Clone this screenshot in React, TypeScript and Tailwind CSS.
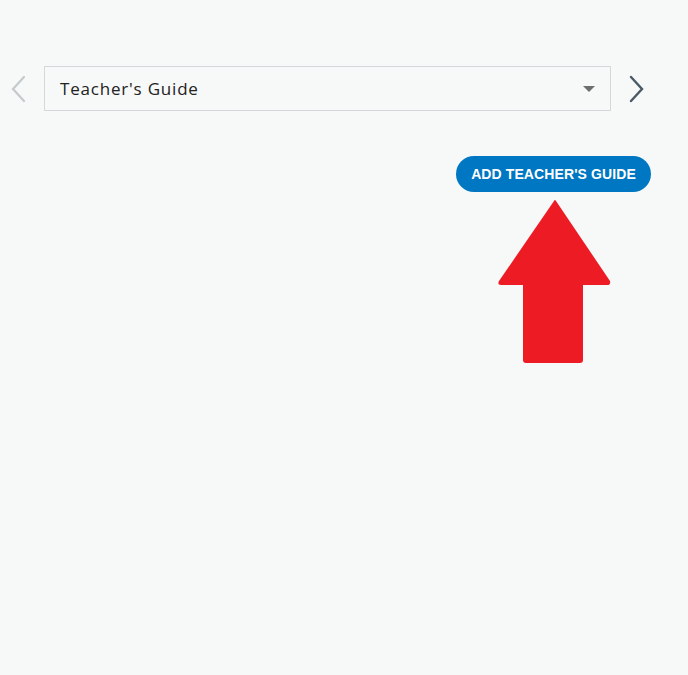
import React from "react";

export default function App() {
  return (
    <div className="min-h-[675px] w-full bg-[#f7f8f8] pt-[66px]" style={{ fontFamily: '"Open Sans", "Liberation Sans", sans-serif' }}>
      <div className="flex items-center">
        <div className="flex w-[44px] justify-center">
          <svg width="18" height="28" viewBox="0 0 18 28" className="ml-[-6px]">
            <path d="M14 2 L3 14 L14 26" fill="none" stroke="#c5cacd" strokeWidth="2.2" strokeLinecap="round" />
          </svg>
        </div>
        <div className="flex h-[45px] w-[567px] items-center justify-between border border-[#d5d8da] bg-[#f7f8f8] pl-[15px] pr-[15px]">
          <span className="text-[17px] tracking-[0.8px] text-[#222]">Teacher&apos;s Guide</span>
          <svg width="12" height="6" viewBox="0 0 12 6">
            <path d="M0 0 L12 0 L6 6 Z" fill="#6e6e6e" />
          </svg>
        </div>
        <div className="flex flex-1 justify-start pl-[18px]">
          <svg width="16" height="28" viewBox="0 0 16 28">
            <path d="M2 2 L13 14 L2 26" fill="none" stroke="#4a5a66" strokeWidth="2.4" strokeLinecap="round" />
          </svg>
        </div>
      </div>
      <div className="mt-[45px] flex justify-end pr-[37px]">
        <div className="flex flex-col items-center">
          <button className="h-[36px] w-[195px] rounded-full bg-[#0077c2] text-[14px] font-bold text-white tracking-[0.1px]" style={{ fontFamily: '"Liberation Sans", Arial, sans-serif' }}>
            ADD TEACHER&apos;S GUIDE
          </button>
          <svg width="116" height="165" viewBox="0 0 116 165" className="mt-[7px] ml-[2px]">
            <path d="M57 2 Q58 0 59 2 L113 82 Q114 86 110 86 L86 86 L86 161 Q86 164 83 164 L29 164 Q26 164 26 161 L26 86 L4 86 Q0 86 2 82 Z" fill="#ed1c24" />
          </svg>
        </div>
      </div>
    </div>
  );
}
